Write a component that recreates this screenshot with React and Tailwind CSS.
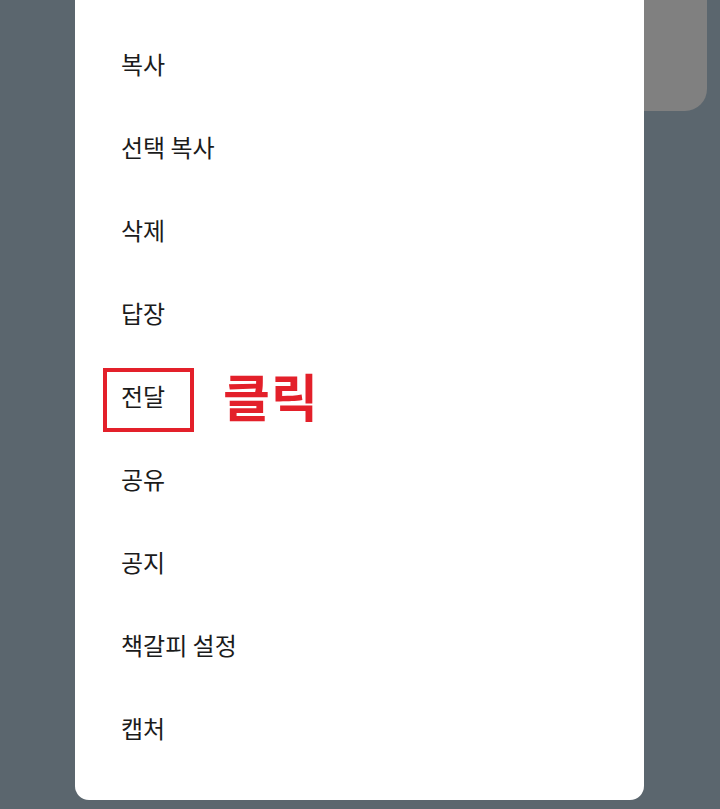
const items = ['복사', '선택 복사', '삭제', '답장', '전달', '공유', '공지', '책갈피 설정', '캡처'];

export default function App() {
  return (
    <div
      className="relative w-[720px] h-[809px] overflow-hidden bg-[#5b666e]"
      style={{ fontFamily: '"Noto Sans CJK KR", "Noto Sans", sans-serif' }}
    >
      {/* chat bubble behind the menu */}
      <div className="absolute right-[13px] top-[-20px] w-[120px] h-[131px] rounded-br-[22px] bg-[#808080]" />

      {/* context menu */}
      <div className="relative ml-[75px] mt-[-14px] w-[569px] h-[814px] rounded-[14px] bg-white pt-[36px] flex flex-col">
        {items.map((label) => (
          <div key={label} className="relative h-[83px] flex items-center pl-[46px] text-[24px] text-[#1b1b1b]">
            <span>{label}</span>
            {label === '전달' && (
              <>
                <div className="absolute left-[28px] top-[14px] w-[91px] h-[64px] border-[4px] border-[#e3202a]" />
                <span className="absolute left-[148px] top-[16px] text-[51px] font-bold leading-none text-[#e3202a] tracking-[1px]">
                  클릭
                </span>
              </>
            )}
          </div>
        ))}
      </div>
    </div>
  );
}
